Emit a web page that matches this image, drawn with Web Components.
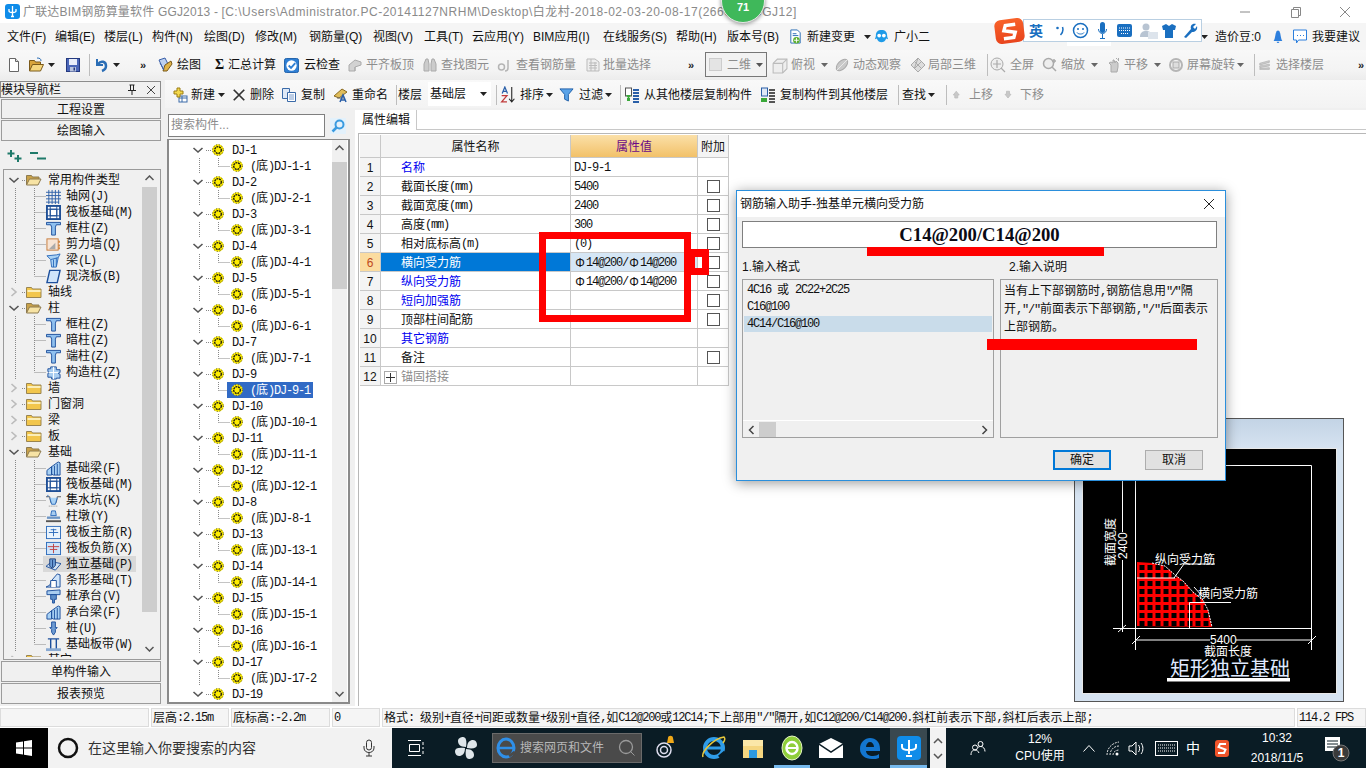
<!DOCTYPE html>
<html lang="zh-CN"><head><meta charset="utf-8"><title>GGJ2013</title>
<style>
html,body{margin:0;padding:0;width:1366px;height:768px;overflow:hidden;background:#f0f0f0;font:12px/16px "Liberation Sans","Noto Sans CJK SC",sans-serif;color:#111}
body{display:flex;flex-direction:column;position:relative}
</style></head><body>
<gl-titlebar></gl-titlebar>
<gl-menubar></gl-menubar>
<gl-toolbar></gl-toolbar>
<gl-workspace>
  <gl-nav slot="nav"></gl-nav>
  <gl-comptools slot="tools"></gl-comptools>
  <gl-comptree slot="tree"></gl-comptree>
  <gl-props slot="props"></gl-props>
</gl-workspace>
<gl-statusbar></gl-statusbar>
<gl-taskbar></gl-taskbar>
<gl-badge></gl-badge>
<gl-ime></gl-ime>
<gl-dialog></gl-dialog>
<gl-mark x="539" y="232" w="152" h="90" b="7px"></gl-mark>
<gl-mark x="691" y="249" w="18" h="26" b="8px 7px 7px 4px"></gl-mark>
<gl-mark x="867" y="247" w="237" h="9" fill></gl-mark>
<gl-mark x="987" y="339" w="210" h="11" fill></gl-mark>
<script>
const FONT='"Liberation Sans","Noto Sans CJK SC",sans-serif';
const BASE=`:host{box-sizing:border-box}*{box-sizing:border-box} svg{display:block;flex:none} .l{font-family:"Liberation Mono",monospace;font-size:12px;letter-spacing:-1.2px}`;
const esc=s=>s.replace(/&/g,'&amp;').replace(/</g,'&lt;');
const sim=s=>esc(s).replace(/[\x20-\x7e]+/g,m=>`<span class="l">${m.replace(/ /g,'&nbsp;')}</span>`);
const simq=s=>sim(s).replace(/<span class="l">"\/"/g,'<span class="l" style="letter-spacing:-3px;margin-right:2px">"/"');
const I={
doc:'<path d="M3.5 1.5h6l3 3v10h-9z" fill="#fff" stroke="#666"/><path d="M9.5 1.5v3h3" fill="#ddd" stroke="#666"/>',
open:'<path d="M1.5 14V3.5h5l1 1.5h5v3" fill="#d9a53c" stroke="#7b5a1a"/><path d="M1.5 14l3-6.500h11l-3 6.500z" fill="#f6d77e" stroke="#7b5a1a"/><path d="M9 1c3 0 4 1 4 3" stroke="#2a6db5" fill="none"/>',
save:'<rect x="1.500" y="1.500" width="13" height="13" fill="#4a66b8" stroke="#24397f"/><rect x="4" y="2" width="8" height="6" fill="#e9eefa"/><rect x="5" y="10" width="6" height="4.500" fill="#b9c4de"/><rect x="8.500" y="10.500" width="1.500" height="3" fill="#24397f"/>',
undo:'<path d="M4 2v6h6" fill="none" stroke="#2a6db5" stroke-width="2"/><path d="M5 7c3-4 8-2.500 8 2 0 2-1.500 4-4 5" fill="none" stroke="#2a6db5" stroke-width="2.500"/>',
draw:'<path d="M2 3l6-2 4 8-5 5z" fill="#bcd0ef" stroke="#3a5fa8"/><path d="M8 8l6-4 1 3-5 7H6z" fill="#dfb347" stroke="#7b5a1a"/><path d="M3 6l4 7" stroke="#3a5fa8"/>',
cloud:'<rect x=".5" y=".5" width="15" height="15" rx="2" fill="#2f7fd4" stroke="#1c5ea8"/><circle cx="8" cy="8" r="5.500" fill="#fff"/><path d="M5 8l2.500 2.500L12 5.500" fill="none" stroke="#2f7fd4" stroke-width="2"/>',
align:'<path d="M2 14V8l6-5 6 2v3l-6 2v4z" fill="#d2d2d2" stroke="#aaa"/><path d="M8 10v4" stroke="#aaa"/>',
binoc:'<path d="M2 14V7l2-5h2l1 5v7zM9 14V7l1-5h2l2 5v7z" fill="#ccc" stroke="#aaa"/>',
eye:'<circle cx="4.500" cy="10" r="3" fill="none" stroke="#b5b5b5" stroke-width="1.500"/><path d="M11 3v8c0 2-1 3-3 3" fill="none" stroke="#b5b5b5" stroke-width="1.500"/>',
batch:'<path d="M2 2h8l4 3v9H2z" fill="#eee" stroke="#bbb"/><path d="M4 6h8M4 8.500h8M4 11h8M6 2v12M10 5v9" stroke="#bbb"/>',
cube:'<path d="M2 6l4-4h9v9l-4 4H2z" fill="#eee" stroke="#bbb"/><path d="M2 6h9v9M11 6l4-4" fill="none" stroke="#bbb"/>',
orbit:'<ellipse cx="8" cy="8" rx="7" ry="4" transform="rotate(-45 8 8)" fill="#c9c9c9" stroke="#aaa"/><path d="M3 13L13 3" stroke="#e8e8e8"/>',
local:'<path d="M8 1l7 7-7 7-7-7z" fill="#ddd" stroke="#aaa"/><path d="M4.500 4.500l7 7M8 1l-3.500 10M11.500 4.500l-7 7" stroke="#aaa"/>',
full:'<circle cx="7" cy="7" r="6" fill="#eee" stroke="#aaa"/><path d="M7 3v8M3 7h8M11 11l4 4" stroke="#aaa" stroke-width="1.200"/>',
zoom:'<circle cx="6.500" cy="6.500" r="5" fill="#eee" stroke="#aaa" stroke-width="1.500"/><path d="M10 10l4 4M12 2v4M10 4h4" stroke="#aaa" stroke-width="1.500"/>',
pan:'<path d="M5 15V8L3 6l2-1 2 1V3l1 0 1 3 1-2 1 1 1 1v4l-1 5z" fill="#ccc" stroke="#aaa"/><path d="M10 1l1.500 1.500M12.500 1v3" stroke="#aaa"/>',
rotate:'<circle cx="8" cy="8" r="6" fill="none" stroke="#b5b5b5" stroke-width="2"/><rect x="5" y="5" width="6" height="6" fill="#ddd" stroke="#aaa"/>',
floors:'<path d="M2 6l11-3v2L2 8zM2 9l11-2v2L2 11zM2 12l11-1v2H2z" fill="#ccc" stroke="#aaa" stroke-width=".7"/>',
newc:'<rect x="7" y="9" width="8" height="6" fill="#fff" stroke="#3a6aa8"/><path d="M7 11h8M10 9v6" stroke="#3a6aa8"/><path d="M5 1h3v3h3v3H8v3H5V7H2V4h3z" fill="#f4d94c" stroke="#9a7d14"/>',
del:'<path d="M2 2l12 12M14 2L2 14" stroke="#333" stroke-width="2"/>',
copy:'<path d="M1.500 1.500h7v10h-7z" fill="#dfe9f7" stroke="#3a6aa8"/><path d="M6.500 5.500h8v9h-8z" fill="#fff" stroke="#3a6aa8"/><path d="M8 8h5M8 10h5M8 12h5" stroke="#7a9ccc"/>',
ren:'<path d="M1 9l8-7 5 3-8 6z" fill="#e0bd5a" stroke="#8a6a20"/><path d="M4 11h7" stroke="#666"/><path d="M7 15l3-7 3 7M8 13h4" fill="none" stroke="#2a5fa8" stroke-width="1.500"/>',
sort:'<path d="M3 7l2.500-6L8 7M4 5h3" fill="none" stroke="#2a5fa8" stroke-width="1.200"/><path d="M2.500 9h5l-5 6h5" fill="none" stroke="#c03a3a" stroke-width="1.200"/><path d="M12 1v14M9.500 12l2.500 3 2.500-3" fill="none" stroke="#222"/>',
filter:'<path d="M1 2h14l-5 6v7l-4-2V8z" fill="#5aa3e8" stroke="#1f5fa8"/>',
cfrom:'<rect x="1.500" y="1" width="6" height="8" fill="#fff" stroke="#555"/><path d="M3 8l2 3h-1v3h3v-3h-1l2-3z" fill="#3aa83a" transform="translate(-1 0)"/><path d="M9 3h6M9 6h6M9 9h6M9 12h6M9 15h6" stroke="#2a5fa8" stroke-width="2"/>',
cto:'<rect x="1.500" y="1" width="6" height="8" fill="#dfe9f7" stroke="#2a5fa8"/><path d="M1 11h6v4H1z" fill="#3aa83a"/><path d="M9 3h6M9 6h6M9 9h6M9 12h6M9 15h6" stroke="#555" stroke-width="2"/>',
up:'<path d="M5 1l4 5H7v4H3V6H1z" transform="translate(2 2)" fill="#c8c8c8" stroke="#bbb"/>',
down:'<path d="M3 0h4v4h2l-4 5-4-5h2z" transform="translate(3 3)" fill="#c8c8c8" stroke="#bbb"/>',
newchg:'<path d="M3 1h7l3 3v11H3z" fill="#fff" stroke="#2a6db5"/><path d="M5 5h4M5 7h6" stroke="#2a6db5"/><circle cx="9" cy="12" r="3.500" fill="#5cae2e"/><path d="M9 9.500v5M6.500 12h5" stroke="#fff"/>',
robot:'<path d="M8 1c4 0 6 2 6 6 0 2 1 3 1 4l-2-1c-1 3-3 4-5 4s-4-1-5-4l-2 1c0-1 1-2 1-4 0-4 2-6 6-6z" fill="#1e9be8"/><circle cx="5.500" cy="7" r="2" fill="#fff"/><circle cx="10.500" cy="7" r="2" fill="#fff"/>',
bell:'<path d="M8 1c-1 0-2 1-2 2-1 1-1 7-3 10h10c-2-3-2-9-3-10 0-1-1-2-2-2z" fill="#2d7fdd"/><path d="M6.500 14a1.500 1.500 0 0 0 3 0z" fill="#2d7fdd"/>',
bub:'<path d="M1.500 1.500h13v10h-8l-2 3v-3h-3z" fill="#fff" stroke="#2d7fdd"/><path d="M5 7h1M8 7h1M11 7h1" stroke="#2d7fdd"/>',
fopen:'<path d="M.5 13V3.500h5l1 1.500H13v3" fill="#c9a24a" stroke="#8c7a50"/><path d="M.5 13l3-6h11.500l-3 6z" fill="#f7e3a4" stroke="#8c7a50"/>',
fclosed:'<path d="M.5 13.500V3.500h5l1 1.500H15v8.500z" fill="#f2c64c" stroke="#9a8550"/><path d="M1.500 6h13v2h-13z" fill="#fbeeb8"/>',
grid:'<path d="M0 3.500h16M0 7h16M0 10.500h16M0 14h14M3 1v15M6.500 1v15M10 1v15M13.500 1v15" stroke="#2d5fa8" fill="none"/>',
raft:'<rect x="1" y="1" width="14" height="14" fill="#fff" stroke="#1f4f96" stroke-width="2"/><rect x="4.500" y="4.500" width="7" height="7" fill="none" stroke="#1f4f96"/><path d="M1 4.500h14M1 11.500h14M4.500 1v14M11.500 1v14" stroke="#1f4f96"/>',
col:'<path d="M.5 1.500h15v2.500H11l-1 2.500v8.500H6V6.500L5 4H.5z" fill="#8fc0ef" stroke="#1d4f9c"/>',
wall:'<rect x="1" y="2" width="12" height="12" fill="#f7e4d4" stroke="#c77a3a"/><path d="M3 13l7-7v7z" fill="#aaa"/><path d="M14 4v2M14 8v2M14 11v2" stroke="#d07a2a" stroke-width="1.500"/>',
beam:'<path d="M1 3l10-1 4-1-2 4-2 10H6L5 7z" fill="#a9d2f5" stroke="#2d6cbc"/><path d="M5 7l8-2M8 7v8M11 5v9" stroke="#2d6cbc"/>',
slab:'<path d="M4 1.500h11l-3 13H1z" fill="#cfe4fa" stroke="#1d4f9c" stroke-width="1.500"/>',
gz:'<path d="M5 2h6v3h4v3l-2 1 2 1v4h-4v1H6v-2H2V9l2-1-2-1V4h3z" fill="#a9cdf0" stroke="#1d4f9c"/><path d="M8 2v13M3 8h10" stroke="#fff"/>',
jcl:'<path d="M1 15V10l5-4V15zM6 6l7-5 2 1v13H8l-2-1z" fill="#a9d2f5" stroke="#1d4f9c"/><path d="M9 5v10M12 3v12" stroke="#1d4f9c"/>',
jsk:'<path d="M0 4h4l1 6h6l1-6h4" fill="none" stroke="#555"/><path d="M2 2v2M4 5l2 7h4l2-7" fill="#a9d2f5" stroke="#2d6cbc"/><path d="M3 14h10" stroke="#888" stroke-dasharray="1 1"/>',
zd:'<path d="M6 2h4l1 5H5z" fill="#a9cdf0" stroke="#2d6cbc"/><rect x="1" y="8" width="14" height="2.500" fill="#6c94c4"/><rect x="0" y="12" width="16" height="2" fill="#555"/>',
zj1:'<rect x=".5" y="1.500" width="15" height="13" fill="#eaf4fd" stroke="#2d6cbc"/><path d="M3 8h10M8 4v8M5 5h6" stroke="#2d6cbc"/>',
zj2:'<rect x=".5" y="1.500" width="15" height="13" fill="#cfe4fa" stroke="#2d6cbc"/><path d="M2 6h12M8 3v10M4 9h8" stroke="#c04040"/>',
dlji:'<path d="M0 10l6-5 10 2-6 7z" fill="#cfe0f2" stroke="#1d4f9c"/><path d="M4 2h6v7l-3 3-3-2z" fill="#6d9fd8" stroke="#1d3f7c"/><path d="M7 3v8" stroke="#1d3f7c"/>',
txj:'<path d="M0 15l4-2 2-5 6-7 3 1v13z" fill="#cfe4fa" stroke="#1d4f9c"/><path d="M5 15V8h6v7" fill="#fff" stroke="#1d4f9c"/>',
zct:'<path d="M1 2l14-1v5H1z" fill="#a9cdf0" stroke="#1d4f9c"/><path d="M5 6h6v5H9v4H7v-4H5z" fill="#5e8fc9" stroke="#1d4f9c"/>',
pile:'<path d="M6 1h4v6h2l-2 2v3l-2 3-2-3V9L4 7h2z" fill="#6e9bd2" stroke="#1d4f9c"/>',
jcbd:'<path d="M2 2h12M2 14h12M5 2v12M11 2v12" stroke="#1d4f9c" stroke-width="1.500"/><rect x="0" y="12" width="16" height="3" fill="#8aaad2"/>',
gear:'<circle cx="6" cy="6" r="5.800" fill="#ffee00"/><circle cx="6" cy="6" r="5.300" fill="none" stroke="#222" stroke-width=".9" stroke-dasharray="1 1.800"/><circle cx="6" cy="6" r="3.300" fill="none" stroke="#111" stroke-width="1.300" stroke-dasharray="2 .7"/>'
};
const ico=(n,w=16,h=16,vb='0 0 16 16')=>`<svg width="${w}" height="${h}" viewBox="${vb}" aria-hidden="true">${I[n]}</svg>`;
const caret=(c='#222')=>`<svg width="7" height="4" viewBox="0 0 7 4"><path d="M0 0h7L3.500 4z" fill="${c}"/></svg>`;
const chev=(dir,x,c)=>dir==='d'?`<path d="M${x-4.500} 6l4.500 4 4.500-4" fill="none" stroke="${c||'#555'}" stroke-width="1.600"/>`:`<path d="M${x-2.500} 4l4.500 4-4.500 4" fill="none" stroke="${c||'#bbb'}" stroke-width="1.600"/>`;
function define(name,css,html,after){
  customElements.define(name,class extends HTMLElement{
    connectedCallback(){ if(this.shadowRoot)return;
      const r=this.attachShadow({mode:'open'});
      r.innerHTML=`<style>${BASE}${css}</style>${typeof html==='function'?html(this):html}`;
      if(after)after(this,r);
    }
  });
}
/* ---------- title bar ---------- */
define('gl-titlebar',`:host{display:flex;align-items:center;height:23px;background:#fff;color:#8a8a8a;font-size:12px;padding-left:5px;flex:none}
.t{margin-left:3px;white-space:nowrap;flex:none;width:790px;overflow:hidden;letter-spacing:.17px}.t span{letter-spacing:.52px}.w{margin-left:auto;display:flex}.w svg{width:50px;height:16px;}`,
`<svg width="15" height="15" viewBox="0 0 15 15"><rect width="15" height="15" rx="3" fill="#0f8ce9"/><path d="M7.500 2v10M4 5v2c0 2 7 2 7 0V5M6 12.500h3" stroke="#fff" fill="none" stroke-width="1.300"/></svg>
<span class="t">广联达BIM钢筋算量软件 GGJ2013 - [<span>C:\\Users\\Administrator.PC-20141127NRHM\\Desktop\\白龙村-2018-02-03-20-08-17(2660版).GGJ12]</span></span>
<span class="w"><svg viewBox="0 0 50 16"><path d="M20 8h10" stroke="#888"/></svg><svg viewBox="0 0 50 16"><path d="M21.500 5.500h7v8h-7zM23.500 5.500v-2h7v8h-2" fill="none" stroke="#888"/></svg><svg viewBox="0 0 50 16" style="margin-right:-4px"><path d="M20 3l10 10M30 3L20 13" stroke="#888"/></svg></span>`);
/* ---------- menu bar ---------- */
define('gl-menubar',`:host{display:flex;align-items:center;height:27px;flex:none;background:#f5f5f5;padding-left:7px;white-space:nowrap;color:#111}
span.m{display:block}`,()=>{
 const it=[['文件(F)',48],['编辑(E)',49],['楼层(L)',48],['构件(N)',52],['绘图(D)',51],['修改(M)',54],['钢筋量(Q)',64],['视图(V)',51],['工具(T)',48],['云应用(Y)',61],['BIM应用(I)',70],['在线服务(S)',73],['帮助(H)',51],['版本号(B)',61]];
 return it.map(([t,w])=>`<span class="m" style="width:${w}px">${t}</span>`).join('')+
 `${ico('newchg',15,15)}<span class="m" style="margin-left:4px;width:57px">新建变更</span>${caret()}<span style="width:3px"></span>${ico('robot',15,15)}<span class="m" style="margin-left:5px;width:307px">广小二</span>${caret()}<span class="m" style="margin-left:7px;width:56px">造价豆:0</span>${ico('bell',14,15)}<span style="width:7px"></span>${ico('bub',16,17)}<span class="m" style="margin-left:4px">我要建议</span>`;
});
/* ---------- generic strip of fixed-width tools ---------- */
const toolCSS=`.i{display:flex;align-items:center;flex:none;white-space:nowrap;height:100%}.i .c{margin-left:auto}.g{color:#8d8d8d}.sep{width:1px;height:22px;background:#bdbdbd;flex:none}
.more{font:bold 11px/1 "Liberation Sans";color:#222;letter-spacing:-1px}`;
function tools(list){let out='';for(const it of list){
  if(it.sep!==undefined){out+=`<span style="width:${it.w}px;flex:none;display:flex;align-items:center;justify-content:center"><span class="sep"></span></span>`;continue}
  const cls='i'+(it.g?' g':'');let inner='';
  if(it.raw)inner+=it.raw;
  if(it.ic)inner+=ico(it.ic,it.iw||16,it.iw||16);
  if(it.t)inner+=`<span style="margin-left:${it.tx}px">${it.t}</span>`;
  if(it.car)inner+=`<span style="margin-left:${it.car}px">${caret(it.g?'#666':'#222')}</span>`;
  out+=`<span class="${cls}" style="width:${it.w}px">${inner}</span>`;
 }return out}
define('gl-toolbar',`:host{display:flex;height:30px;flex:none;padding:1px 0 1px 6px;align-items:stretch;background:linear-gradient(#f8f8f8,#f3f3f3 70%,#ececec);font-size:12px}
${toolCSS}.box{display:flex;align-items:center;gap:5px;flex:none;width:62px;margin:1px 4px 2px 0;border:1px solid #777;padding-left:3px;color:#8d8d8d;background:#f2f2f2;white-space:nowrap}
.box i{width:13px;height:13px;background:#e4e4e4;border:1px solid #ccc;flex:none}`,
()=>tools([
{ic:'doc',w:22},{ic:'open',w:20},{raw:caret(),w:17},{ic:'save',w:20},{sep:1,w:8},{ic:'undo',w:20},{raw:caret(),w:27},
{raw:'<span class="more">»</span>',w:17},
{ic:'draw',t:'绘图',tx:4,w:54},{raw:'<b style="font:bold 14px/1 \'Liberation Serif\';width:17px;text-align:center">Σ</b>',t:'汇总计算',tx:0,w:73},
{ic:'cloud',iw:15,t:'云检查',tx:5,w:63},{ic:'align',t:'平齐板顶',tx:3,g:1,w:75},{ic:'binoc',t:'查找图元',tx:3,g:1,w:75},{ic:'eye',t:'查看钢筋量',tx:3,g:1,w:88},{ic:'batch',t:'批量选择',tx:2,g:1,w:103},
{raw:'<span class="more">»</span>',w:17}])+
`<span class="box"><i></i>二维<span style="margin-left:auto;margin-right:4px">${caret('#555')}</span></span>`+
tools([{ic:'cube',iw:17,t:'俯视',tx:3,g:1,car:6,w:63},{ic:'orbit',t:'动态观察',tx:3,g:1,w:76},{ic:'local',t:'局部三维',tx:2,g:1,w:75},{sep:1,w:5},
{ic:'full',t:'全屏',tx:4,g:1,w:52},{ic:'zoom',t:'缩放',tx:3,g:1,car:6,w:64},{ic:'pan',t:'平移',tx:2,g:1,car:6,w:62},{ic:'rotate',t:'屏幕旋转',tx:3,g:1,car:2,w:82},{sep:1,w:8},
{ic:'floors',iw:14,t:'选择楼层',tx:4,g:1,w:100},{raw:'<span class="more">»</span>',w:8}]));
/* ---------- workspace ---------- */
define('gl-workspace',`:host{display:grid;grid-template-columns:162px 1fr;grid-template-rows:28px 1fr;height:626px;flex:none;background:#f0f0f0}
.n{grid-row:1/3;display:block}.t{grid-column:2}.b{grid-column:2;display:flex;min-height:0}`,
`<slot class="n" name="nav"></slot><div class="t"><slot name="tools"></slot></div><div class="b"><slot name="tree"></slot><slot name="props"></slot></div>`);
define('gl-comptools',`:host{display:flex;height:28px;padding:1px 0 0 7px;background:linear-gradient(#f9f9f9,#f3f3f3);margin-left:3px;align-items:stretch;font-size:12px;color:#111}${toolCSS}
.sep{height:20px}.cb{display:flex;align-items:center;background:#fff;width:63px;height:24px;margin:1px 3px 0 0;padding-left:2px;flex:none;white-space:nowrap}.cb span{margin-left:auto;margin-right:4px}`,
()=>tools([{ic:'newc',t:'新建',tx:3,car:3,w:60},{ic:'del',iw:14,t:'删除',tx:4,w:49},{ic:'copy',t:'复制',tx:4,w:52},{ic:'ren',t:'重命名',tx:3,w:61},{sep:1,w:4},{t:'楼层',tx:0,w:30}])+
`<span class="cb">基础层<span>${caret()}</span></span>`+
tools([{sep:1,w:5},{ic:'sort',iw:17,t:'排序',tx:4,car:2,w:60},{ic:'filter',iw:15,t:'过滤',tx:5,car:2,w:58},{sep:1,w:7},{ic:'cfrom',t:'从其他楼层复制构件',tx:4,w:136},{ic:'cto',t:'复制构件到其他楼层',tx:4,w:134},{sep:1,w:8},{t:'查找',tx:0,car:2,w:40},{sep:1,w:9},{ic:'up',iw:12,t:'上移',tx:6,g:1,w:51},{ic:'down',iw:12,t:'下移',tx:6,g:1,w:60}]));
/* ---------- scrollbar ---------- */
define('gl-vscroll',`:host{display:flex;flex-direction:column;width:15px;background:#f0f0f0;flex:none;height:100%}
.a{height:16px;flex:none;display:flex;align-items:center;justify-content:center}.th{background:#cdcdcd;flex:none}.f{flex:1}`,
h=>`<div class="a"><svg width="9" height="6" viewBox="0 0 9 6"><path d="M.5 5l4-4 4 4" fill="none" stroke="#555" stroke-width="1.500"/></svg></div>
<div class="th" style="margin-top:${h.getAttribute('top')}px;height:${h.getAttribute('size')}px"></div><div class="f"></div>
<div class="a"><svg width="9" height="6" viewBox="0 0 9 6"><path d="M.5 1l4 4 4-4" fill="none" stroke="#555" stroke-width="1.500"/></svg></div>`);
/* ---------- nav ---------- */
const navRows=[
['o','常用构件类型'],['c','轴网(J)','grid'],['c','筏板基础(M)','raft'],['c','框柱(Z)','col'],['c','剪力墙(Q)','wall'],['c','梁(L)','beam'],['e','现浇板(B)','slab'],
['f','轴线'],['o','柱'],['c','框柱(Z)','col'],['c','暗柱(Z)','col'],['c','端柱(Z)','col'],['e','构造柱(Z)','gz'],
['f','墙'],['f','门窗洞'],['f','梁'],['f','板'],['o','基础'],['c','基础梁(F)','jcl'],['c','筏板基础(M)','raft'],['c','集水坑(K)','jsk'],['c','柱墩(Y)','zd'],['c','筏板主筋(R)','zj1'],['c','筏板负筋(X)','zj2'],['s','独立基础(P)','dlji'],['c','条形基础(T)','txj'],['c','桩承台(V)','zct'],['c','承台梁(F)','jcl'],['c','桩(U)','pile'],['e','基础板带(W)','jcbd'],['f','其它']];
define('gl-navtree',`:host{display:flex;height:491px;flex:none;margin:1px 1px 0 3px;border:1px solid #9a9a9a;padding-right:3px;padding-bottom:2px;background:#f0f0f0;overflow:hidden}
.rows{flex:1;padding-top:2px;overflow:hidden;width:0}.r{display:flex;align-items:center;height:16px;white-space:nowrap}.t{margin-left:6px}.ct{margin-left:5px}
.s{display:flex;align-items:center;background:#d9d9d9;width:93px;margin-left:-3px;padding-left:3px;height:16px}`,
()=>{let h='<div class="rows">';for(const [k,t,ic] of navRows){
 if(k==='o'||k==='f'){h+=`<div class="r"><svg width="22" height="16">${chev(k==='o'?'d':'r',10)}<path d="M18 8.500h4" stroke="#888" stroke-dasharray="1 1"/></svg>${ico(k==='o'?'fopen':'fclosed')}<span class="t">${sim(t)}</span></div>`}
 else{const half=k==='e';const body=`${ico(ic,15,15)}<span class="ct">${sim(t)}</span>`;
 h+=`<div class="r"><svg width="42" height="16"><path d="M11.500 0v16" stroke="#888" stroke-dasharray="1 1"/><path d="M30.500 0v${half?8:16}M30.500 8.500h11" stroke="#888" stroke-dasharray="1 1" fill="none"/></svg>${k==='s'?`<span class="s">${body}</span>`:body}</div>`}
}return h+`</div><gl-vscroll top="1" size="425"></gl-vscroll>`});
define('gl-nav',`:host{display:flex;flex-direction:column;height:626px;width:162px;background:#f0f0f0;font-size:12px}
.h{display:flex;align-items:center;height:17px;margin:1px 1px 0 0;border:1px solid #8c8c8c;white-space:nowrap;flex:none}.h svg:first-of-type{margin-left:auto}
.b{display:flex;align-items:center;justify-content:center;height:21px;padding-top:1px;border:1px solid #9c9c9c;background:#f0f0f0;margin:1px 1px 0 1px;flex:none}
.pl{display:flex;align-items:center;gap:7px;height:27px;padding:2px 0 0 7px;flex:none}`,
`<div class="h">模块导航栏<svg width="10" height="11" viewBox="0 0 10 11"><path d="M2.500 1h5M3.500 1v5M6.500 1v5M1 6.500h8M5 6v5" stroke="#222" fill="none"/></svg><svg width="8" height="8" viewBox="0 0 8 8" style="margin:0 5px 0 10px"><path d="M0 0l8 8M8 0L0 8" stroke="#444"/></svg></div>
<div class="b" style="height:20px">工程设置</div><div class="b">绘图输入</div>
<div class="pl"><svg width="16" height="14" viewBox="0 0 16 14"><path d="M4 1v7M0.500 4.500h7M11 6v7M7.500 9.500h7" stroke="#1f7a6a" stroke-width="2"/></svg><svg width="16" height="14" viewBox="0 0 16 14"><path d="M0 4h8M7 9.500h9" stroke="#1f7a6a" stroke-width="2"/></svg></div>
<gl-navtree></gl-navtree>
<div class="b">单构件输入</div><div class="b">报表预览</div>`);
/* ---------- component tree ---------- */
const dj=[1,2,3,4,5,6,7,9,10,11,12,8,13,14,15,16,17,19];
define('gl-comptree',`:host{display:flex;flex-direction:column;width:188px;height:598px;flex:none;padding:6px 0 0 6px;font-size:12px;color:#111}
.s{display:flex;align-items:center;height:23px;flex:none}.in{width:157px;height:23px;border:1px solid #7f7f7f;background:#fff;color:#8c8c8c;padding-left:2px;line-height:21px;font-size:12px}
.box{display:flex;height:565px;flex:none;margin:2px 0 0 -1px;width:183px;border:1px solid #8a8a8a;border-width:1px 2px 2px 2px;padding-right:1px;background:#fff;overflow:hidden}
.rows{flex:1;width:0;overflow:hidden;padding:2px 0 0 1px}.r{display:flex;align-items:center;height:16px;white-space:nowrap}.t{margin-left:9px}
.sel{display:flex;align-items:center;background:#316ac5;color:#fff;height:16px;padding:0 3px 0 4px;margin-left:-4px}`,
()=>{let h=`<div class="s"><div class="in">搜索构件...</div><svg width="16" height="16" viewBox="0 0 16 16" style="margin-left:5px"><rect width="16" height="16" fill="#e3f1fb"/><circle cx="9.500" cy="6.500" r="4" fill="none" stroke="#3a9be0" stroke-width="2"/><path d="M6.500 9.500L2.500 13.500" stroke="#3a9be0" stroke-width="2.500"/></svg></div><div class="box"><div class="rows">`;
for(const n of dj){const c=n===17?'2':'1';const sel=n===9;
 h+=`<div class="r"><svg width="42" height="16">${chev('d',28)}<path d="M36 8.500h5" stroke="#888" stroke-dasharray="1 1"/></svg>${ico('gear',12,12,'0 0 12 12')}<span class="t" style="margin-left:8px">${sim('DJ-'+n)}</span></div>`;
 const g=`${ico('gear',12,12,'0 0 12 12')}<span class="t" style="margin-left:7px">${sim('(底)DJ-'+n+'-'+c)}</span>`;
 h+=`<div class="r"><svg width="61" height="16"><path d="M29.500 0v16M48.500 0v8.500M48.500 8.500h11" stroke="#888" stroke-dasharray="1 1" fill="none"/></svg>${n===19?'':sel?`<span class="sel">${g}</span>`:g}</div>`;
}return h+`</div><gl-vscroll top="6" size="127"></gl-vscroll></div>`});
/* ---------- properties ---------- */
const PHI='<span style="display:inline-block;width:12px;text-align:center;font:12px/1 \'Liberation Sans\'">Φ</span>';
const rebar=`${PHI}${sim('14@200/')}${PHI}${sim('14@200')}`;
const rows=[['名称',sim('DJ-9-1'),0,1],['截面长度(mm)',sim('5400'),1],['截面宽度(mm)',sim('2400'),1],['高度(mm)',sim('300'),1],['相对底标高(m)',sim('(0)'),1],['横向受力筋',rebar,1,0],['纵向受力筋',rebar,1,1],['短向加强筋','',1,1],['顶部柱间配筋','',1],['其它钢筋','',0,1],['备注','',1],['锚固搭接','',0]];
define('gl-prop-table',`:host{display:grid;grid-template-columns:21px 190px 127px 31px;grid-template-rows:23px;grid-auto-rows:19px;width:369px;flex:none;font-size:12px;background:#fff;align-self:flex-start}
div{border-bottom:1px solid #c8c8c8;border-right:1px solid #c8c8c8;display:flex;align-items:center;white-space:nowrap}
.hd{background:#f4f4f4;justify-content:center;padding-top:2px}.hd.v{background:linear-gradient(#fbe0a8,#f2c169);color:#6a0a86}
.n{background:#f4f4f4;justify-content:center;font-size:12px;color:#111;padding-top:1px}.nm{padding:2px 0 0 20px}.u{color:#0000f0}.v2{padding:2px 0 0 3px}
.ck{justify-content:center}.ck i{display:block;width:13px;height:13px;border:1px solid #555;background:#fff}
.act.n{background:#fbdca0;color:#c0491a}.act.nm{background:#0078d7;color:#fff}.act.v2{background:#d5e6f5}
.g{color:#8c8c8c}.p{display:flex;width:13px;height:13px;border:1px solid #aaa;align-items:center;justify-content:center;margin:0 4px 0 -17px;flex:none}`,
()=>{let h=`<div class="hd"></div><div class="hd">属性名称</div><div class="hd v">属性值</div><div class="hd">附加</div>`;
rows.forEach((r,i)=>{const a=i===5?' act':'';const cl=r[3]?' u':'';const last=i===11;
 h+=`<div class="n${a}">${i+1}</div><div class="nm${a}${cl}${last?' g':''}">${last?`<span class="p"><svg width="9" height="9" viewBox="0 0 9 9"><path d="M0 4.500h9M4.500 0v9" stroke="#333"/></svg></span>`:''}${sim(r[0])}</div><div class="v2${a}">${r[1]}</div><div class="ck">${r[2]?'<i></i>':''}</div>`});
return h});
define('gl-preview',`:host{display:block;width:270px;height:284px;flex:none;border:1px solid #555;background:linear-gradient(#c3d4e5 0,#d6e3f1 30px);padding:30px 7px 8px 8px;margin-left:345px;margin-top:283px}
svg{background:#000;outline:1px solid #e8e8e8}`,
()=>{let g='';for(let x=1138;x<1216;x+=8)g+=`M${x} 560V630`;for(let y=563.500;y<630;y+=8)g+=`M1135 ${y}H1216`;
return `<svg width="253" height="244" viewBox="1083 449 253 244" font-family='"Noto Sans CJK SC",sans-serif' font-size="12" fill="#fff">
<defs><clipPath id="c"><path d="M1137 562L1152 563 1165 566 1175 575 1183 581 1193 592 1203 600 1208 610 1212 627 1137 626z"/></clipPath></defs>
<path d="${g}" clip-path="url(#c)" stroke="#f00" stroke-width="3" fill="none"/>
<path d="M1152 563L1165 566 1175 575 1183 581 1193 592 1203 600 1208 610 1212 627" fill="none" stroke="#fff" stroke-dasharray="2 1"/>
<path d="M1135.500 465.500H1311.500V628.500H1135.500ZM1137 578H1175M1189.500 628V602.500H1231M1174 578l10-14H1215M1194 587l9 10M1122.500 449V532M1122.500 560V632M1113 628.500H1135M1118 632l8-7M1135.500 628V650M1311.500 628V650M1136 640H1210M1236 640H1311M1132 644l8-8M1308 644l8-8" fill="none" stroke="#fff"/>
<text x="1155" y="564">纵向受力筋</text><text x="1198" y="598">横向受力筋</text>
<text x="1210" y="644" font-family="Liberation Sans">5400</text><text x="1204" y="656">截面长度</text>
<text transform="translate(1115 566) rotate(-90)">截面宽度</text><text transform="translate(1127 559) rotate(-90)" font-family="Liberation Sans" font-size="12">2400</text>
<text x="1170" y="676" font-size="20" fill="#dfe9ff">矩形独立基础</text>
<rect x="1167" y="678" width="123" height="3.500"/></svg>`});
define('gl-props',`:host{display:flex;flex-direction:column;width:1011px;height:596px;flex:none;margin:2px 0 0 5px;background:#fff;font-size:12px}
.tabs{display:flex;height:20px;flex:none;border-bottom:1px solid #c8c8c8;background:#fff}.tab{width:62px;height:20px;padding:2px 0 0 7px;border-right:1px solid #c8c8c8;background:#fff;font-size:12px}
.p{flex:1;margin:3px 0 0 3px;border:1px solid #b8b8b8;border-width:1px 0 0 1px;padding:1px 0 0 1px;display:flex;min-height:0;overflow:hidden}`,
`<div class="tabs"><div class="tab">属性编辑</div></div><div class="p"><gl-prop-table></gl-prop-table><gl-preview></gl-preview></div>`);
/* ---------- status bar ---------- */
define('gl-statusbar',`:host{display:flex;height:22px;flex:none;gap:2px;background:#fff;padding:2px 0 1px 0;font-size:12px;white-space:nowrap;overflow:hidden}
div{border:1px solid #dcdcdc;background:#f5f5f5;display:flex;align-items:center;padding:1px 0 0 1px;flex:none;height:19px}`,
`<div style="width:149px"></div><div style="width:78px">${sim('层高:2.15m')}</div><div style="width:99px">${sim('底标高:-2.2m')}</div><div style="width:48px">${sim('0')}</div><div style="width:913px">${sim('格式: 级别+直径+间距或数量+级别+直径,如C12@200或12C14;下上部用"/"隔开,如C12@200/C14@200.斜杠前表示下部,斜杠后表示上部;')}</div><div style="width:69px">${sim('114.2 FPS')}</div>`);
/* ---------- task bar ---------- */
const W='fill="#fff"';
define('gl-taskbar',`:host{display:flex;align-items:center;height:40px;flex:none;background:#0a1c25;color:#fff;font-size:12px;white-space:nowrap}
.st{width:48px;height:40px;background:#000;display:flex;align-items:center;justify-content:center;flex:none}
.se{width:344px;height:40px;background:#f2f2f2;color:#333;font-size:14px;display:flex;align-items:center;flex:none}
.bx{display:flex;align-items:center;width:150px;height:30px;background:#4a4a4a;border:1px solid #6a6a6a;color:#b8b8b8;flex:none;margin-left:14px}
.sl{width:36px;height:40px;display:flex;align-items:center;justify-content:center;flex:none;position:relative;background:transparent}
.on{background:#39484f}.bar::after{content:"";display:block;position:absolute;left:0;right:0;bottom:0;height:3px;background:#76b9ed}
.ar{width:16px;height:40px;background:#f2f2f2;display:flex;flex-direction:column;align-items:center;justify-content:space-around;padding:5px 0;flex:none}
.cpu{text-align:center;line-height:17px;width:70px;flex:none}`,
`<div class="st"><svg width="16" height="16" viewBox="0 0 16 16"><path d="M0 2.500l7-1v6H0zM8 1.300l8-1.300v7.500H8zM0 8.500h7v6l-7-1zM8 8.500h8V16l-8-1.200z" ${W}/></svg></div>
<div class="se"><svg width="22" height="22" viewBox="0 0 22 22" style="margin:0 7px 0 9px"><circle cx="11" cy="11" r="9" fill="none" stroke="#111" stroke-width="2.500"/></svg><span style="margin-left:2px;width:275px">在这里输入你要搜索的内容</span><svg width="12" height="18" viewBox="0 0 12 18"><rect x="3.500" y="1" width="5" height="10" rx="2.500" fill="none" stroke="#333"/><path d="M1 7v2c0 6 10 6 10 0V7M6 14v3M3 17h6" fill="none" stroke="#333"/></svg></div>
<svg width="18" height="16" viewBox="0 0 18 16" style="margin-left:15px"><path d="M1 .5h13M1 15.500h13M2.500 4.500h10v7h-10zM16 2v3M16 7v2M16 11v3" fill="none" stroke="#fff"/></svg>
<svg width="24" height="24" viewBox="0 0 24 24" style="margin-left:29px"><g fill="#dfe6ea"><path d="M12 11C6 11 4 8 4 5c0-3 3-4 5-4 3 0 4 4 3 10z"/><path d="M13 12c0-6 3-8 6-8 3 0 4 3 4 5 0 3-4 4-10 3z"/><path d="M12 13c6 0 8 3 8 6 0 3-3 4-5 4-3 0-4-4-3-10z"/><path d="M11 12c0 6-3 8-6 8-3 0-4-3-4-5 0-3 4-4 10-3z"/></g></svg>
<div class="bx"><svg width="20" height="24" viewBox="0 0 20 24" style="margin-left:3px"><ellipse cx="10" cy="12" rx="8" ry="9" fill="none" stroke="#2f8fe8" stroke-width="3"/><path d="M3 12h14" stroke="#2f8fe8" stroke-width="2.500"/><path d="M13 20l6-4" stroke="#4a4a4a" stroke-width="3"/></svg><span style="margin-left:4px;width:98px">搜索网页和文件</span><svg width="18" height="18" viewBox="0 0 18 18"><circle cx="8" cy="8" r="6.500" fill="none" stroke="#9a9a9a" stroke-width="1.300"/><path d="M12.500 12.500l4 4" stroke="#9a9a9a"/></svg></div>
<span class="sl" style="width:31px;margin-left:8px"><svg width="24" height="26" viewBox="0 0 24 26"><circle cx="10" cy="15" r="7" fill="none" stroke="#dde" stroke-width="1.500"/><circle cx="10" cy="15" r="3.500" fill="none" stroke="#dde" stroke-width="1.500"/><path d="M14 3c0-3 5-3 5 0l1 5h-7z" fill="#f0a818"/></svg></span>
<span class="sl" style="margin-left:15px"><svg width="26" height="26" viewBox="0 0 26 26"><ellipse cx="13" cy="13" rx="9" ry="9" fill="none" stroke="#2f9ce8" stroke-width="4"/><path d="M4 13h18" stroke="#2f9ce8" stroke-width="3"/><path d="M18 22l6-5" stroke="#0a1c25" stroke-width="3"/><path d="M2 22C0 17 12 4 23 2c2 2-1 6-1 6" fill="none" stroke="#e8c83c" stroke-width="1.500"/></svg></span>
<span class="sl" style="margin-left:3px"><svg width="24" height="24" viewBox="0 0 24 24"><path d="M2 4h9l2 3h9v15H2z" fill="#f5d680"/><rect x="8" y="14" width="8" height="8" fill="#2e9ae0"/><path d="M2 4h20v6H2z" fill="#fbe7a8"/></svg></span>
<span class="sl bar" style="margin-left:3px"><svg width="24" height="26" viewBox="0 0 24 26"><ellipse cx="12" cy="13" rx="10" ry="12" fill="#8fce3a" stroke="#e8f5c8"/><ellipse cx="12" cy="13" rx="5.500" ry="6" fill="none" stroke="#fff" stroke-width="2.500"/><path d="M6 13h12" stroke="#fff" stroke-width="2"/></svg></span>
<span class="sl" style="margin-left:3px"><svg width="24" height="20" viewBox="0 0 24 20"><path d="M0 6L12 0l12 6v14H0z" fill="#fff"/><path d="M0 6l12 8 12-8" fill="none" stroke="#0a1c25" stroke-width="1.500"/></svg></span>
<span class="sl" style="margin-left:3px"><svg width="22" height="22" viewBox="0 0 22 22"><path d="M1 12C1 5 6 1 11 1c6 0 10 4 10 11v2H7c0 3 3 5 7 5 2 0 5-1 6-2v4c-2 1-4 1-7 1C6 22 1 18 1 12zm6-2h8c0-3-2-5-4-5s-4 2-4 5z" fill="#1376d0"/></svg></span>
<span class="sl on bar" style="margin-left:2px;width:37px"><svg width="24" height="24" viewBox="0 0 24 24"><rect width="24" height="24" rx="4" fill="#0f8ce9"/><path d="M12 4v14M5 8v3c0 4 14 4 14 0V8M9 20h6" fill="none" stroke="#fff" stroke-width="2"/></svg></span>
<div class="ar" style="margin-left:3px"><svg width="10" height="6" viewBox="0 0 10 6"><path d="M1 5l4-4 4 4" fill="none" stroke="#555" stroke-width="1.500"/></svg><svg width="10" height="6" viewBox="0 0 10 6"><path d="M1 1l4 4 4-4" fill="none" stroke="#555" stroke-width="1.500"/></svg></div>
<svg width="16" height="16" viewBox="0 0 16 16" style="margin-left:24px"><circle cx="10.500" cy="4" r="2.500" fill="none" stroke="#fff"/><circle cx="5" cy="7.500" r="2.500" fill="none" stroke="#fff"/><path d="M1 15c0-4 2-5 4-5s3 1 4 3M8 7.500c1-1 2-1 3-1 2 0 4 2 4 5" fill="none" stroke="#fff"/></svg>
<div class="cpu" style="margin-left:19px">12%<br>CPU使用</div>
<svg width="12" height="7" viewBox="0 0 12 7" style="margin-left:8px"><path d="M.5 6.500l5.500-6 5.500 6" fill="none" stroke="#fff"/></svg>
<svg width="16" height="15" viewBox="0 0 16 15" style="margin-left:11px"><path d="M1 14C1 7 6 2 13 1M4 14c0-5 4-9 9-9M7 14c0-3 3-5 6-5" fill="none" stroke="#ddd" stroke-dasharray="2 1"/><circle cx="11" cy="13" r="1.500" fill="#fff"/></svg>
<svg width="16" height="15" viewBox="0 0 16 15" style="margin-left:6px"><path d="M1 5h3l4-4v13l-4-4H1zM10.500 4c1.500 2 1.500 5 0 7M13 2c2.500 3 2.500 8 0 11" fill="none" stroke="#fff"/></svg>
<svg width="23" height="15" viewBox="0 0 23 15" style="margin-left:11px"><rect x=".5" y=".5" width="22" height="14" fill="none" stroke="#fff"/><path d="M3 4h17M3 7h17M3 10h17" stroke="#fff" stroke-dasharray="1 1"/></svg>
<span style="font-size:14px;margin-left:8px;width:22px">中</span>
<svg width="14" height="17" viewBox="0 0 14 17" style="margin-left:7px"><rect width="14" height="17" rx="3" fill="#f0542a"/><path d="M11 4H5L3.500 7l7 2.500L9 13H3" fill="none" stroke="#fff" stroke-width="2"/></svg>
<div style="margin-left:12px;width:72px;text-align:center;line-height:20px;flex:none">10:32<br>2018/11/5</div>
<svg width="28" height="30" viewBox="0 0 28 30" style="margin-left:11px"><path d="M1 4h15v14h-3l-3 3v-3H1z" fill="#fff"/><path d="M3 8h11M3 11h11M3 14h11" stroke="#0a1c25"/><circle cx="17" cy="20" r="8" fill="#3a3a3a" stroke="#777"/><text x="17" y="24" text-anchor="middle" font-family="Liberation Sans" font-size="12" font-weight="bold" fill="#fff">1</text></svg>`);
/* ---------- overlays ---------- */
define('gl-mark',`:host{position:absolute;display:block;border-style:solid;border-color:#f00}`,'',(h)=>{
  const a=n=>h.getAttribute(n);Object.assign(h.style,{left:a('x')+'px',top:a('y')+'px',width:a('w')+'px',height:a('h')+'px'});
  if(h.hasAttribute('fill')){h.style.background='#f00';h.style.borderWidth='0'}else h.style.borderWidth=a('b');
});
define('gl-badge',`:host{position:absolute;left:721px;top:-21px;width:44px;height:44px;border-radius:50%;background:#3fb85a;border:1px solid #e8e8e8;box-shadow:0 1px 4px rgba(0,0,0,.45);color:#fff;font:bold 11px/1 "Liberation Sans";display:flex;align-items:flex-end;justify-content:center;padding-bottom:9px}`,`71`);
define('gl-ime',`:host{position:absolute;left:995px;top:19px;display:flex;align-items:flex-start;font-family:${FONT}}
.s{width:29px;height:24px;border-radius:6px;background:linear-gradient(#f8622a,#e8441c);transform:rotate(-7deg);display:flex;align-items:center;justify-content:center;flex:none;z-index:1}
.b{width:179px;height:23px;margin-left:-1px;background:#fff;border:1px solid #b9cfe2;display:flex;align-items:center;padding-left:5px;color:#1a6fc0;font:bold 14px/1 ${FONT}}
.p{position:absolute;left:72px;top:23px;width:44px;height:4px;background:#fff}`,
`<div class="s"><svg width="20" height="20" viewBox="0 0 20 20"><path d="M16 4H6L4 9l11 3-2 5H3" fill="none" stroke="#fff" stroke-width="3.500"/></svg></div>
<div class="b"><span style="width:27px">英</span><svg width="8" height="12" viewBox="0 0 8 12" style="margin-right:8px"><circle cx="1.500" cy="3" r="1.300" fill="#1a6fc0"/><path d="M6.500 2c1 3 0 6-2 8" fill="none" stroke="#1a6fc0" stroke-width="1.500"/></svg>
<svg width="17" height="17" viewBox="0 0 17 17" style="margin-right:9px"><circle cx="8.500" cy="8.500" r="7" fill="#fff" stroke="#1a6fc0" stroke-width="1.500"/><circle cx="6" cy="7" r="1" fill="#1a6fc0"/><circle cx="11" cy="7" r="1" fill="#1a6fc0"/><path d="M5 10.500c1 2 6 2 7 0" fill="none" stroke="#1a6fc0"/></svg>
<svg width="9" height="17" viewBox="0 0 9 17" style="margin-right:10px"><rect x="2" y="0" width="5" height="11" rx="2.500" fill="#1a6fc0"/><path d="M.5 7c0 6 8 6 8 0M4.500 12v4M2 16.500h5" fill="none" stroke="#1a6fc0"/></svg>
<svg width="15" height="13" viewBox="0 0 15 13" style="margin-right:8px"><rect width="15" height="13" rx="2" fill="#1a6fc0"/><path d="M2 4h11M2 6.500h11M4 9.500h7" stroke="#fff" stroke-dasharray="1 1"/></svg>
<svg width="18" height="16" viewBox="0 0 18 16" style="margin-right:4px"><circle cx="6" cy="4" r="3.500" fill="#b8c4d2"/><path d="M0 14c0-5 3-6 6-6s6 1 6 6z" fill="#b8c4d2"/><rect x="8" y="9" width="10" height="7" fill="#dde4ec"/></svg>
<svg width="14" height="14" viewBox="0 0 14 14" style="margin-right:7px"><path d="M4 0L0 2l1 4h2v8h8V6h2l1-4-4-2-3 2z" fill="#1a6fc0"/></svg>
<svg width="15" height="15" viewBox="0 0 15 15"><path d="M1 14l7-8c-1-3 1-6 5-5l-3 3 2 2 2-3c1 4-2 6-5 6l-6 6z" fill="#1a6fc0"/></svg></div><div class="p"></div>`);
define('gl-dialog',`:host{position:absolute;left:736px;top:190px;width:490px;height:291px;background:#f0f0f0;border:1px solid #2b8fdc;box-shadow:0 2px 12px rgba(0,0,0,.4);display:flex;flex-direction:column;font-size:12px;color:#111}
.tt{display:flex;align-items:center;height:26px;background:#fff;padding-left:3px;flex:none;justify-content:space-between;padding-right:10px}
.in{height:27px;margin:4px 8px 0 5px;border:1px solid #7f7f7f;background:#fff;text-align:center;font:bold 18.7px/25px "Liberation Serif",serif;flex:none;color:#0a0a14}
.lb{display:flex;height:31px;align-items:center;flex:none;padding:7px 0 0 5px;font-size:12px}
.cols{display:flex;gap:6px;margin-left:5px;flex:none}.col{height:159px;border:1px solid #a0a0a0;background:#f0f0f0;flex:none}
.li{height:17px;display:flex;align-items:center;padding-left:3px;margin:0 1px}.li.s{background:#c9dcea;height:16px;margin-top:1px}
.hs{display:flex;align-items:center;height:18px;margin-top:88px;border-top:1px solid #fff;justify-content:space-between;padding:0 4px}
.th{width:17px;height:15px;background:#cdcdcd;margin-left:4px;margin-right:auto}
.txt{padding:3px 0 0 3px;line-height:17px;font-size:12px;white-space:nowrap}
.bt{display:flex;justify-content:flex-end;margin-top:12px;padding-right:22px;gap:34px;flex:none}.b{width:58px;height:20px;background:#e1e1e1;border:1px solid #adadad;display:flex;align-items:center;justify-content:center}.b.d{border:2px solid #0078d7}`,
`<div class="tt"><span>钢筋输入助手-独基单元横向受力筋</span><svg width="12" height="12" viewBox="0 0 12 12"><path d="M1 1l10 10M11 1L1 11" stroke="#222"/></svg></div>
<div class="in">C14@200/C14@200</div>
<div class="lb"><span style="width:267px">1.输入格式</span><span>2.输入说明</span></div>
<div class="cols"><div class="col" style="width:252px;padding-top:1px"><div class="li">${sim('4C16 或 2C22+2C25')}</div><div class="li">${sim('C16@100')}</div><div class="li s">${sim('4C14/C16@100')}</div>
<div class="hs"><svg width="8" height="10" viewBox="0 0 8 10"><path d="M6.500 1l-4 4 4 4" fill="none" stroke="#444" stroke-width="1.500"/></svg><span class="th"></span><svg width="8" height="10" viewBox="0 0 8 10"><path d="M1.500 1l4 4-4 4" fill="none" stroke="#444" stroke-width="1.500"/></svg></div></div>
<div class="col txt" style="width:218px">${simq('当有上下部钢筋时,钢筋信息用"/"隔')}<br>${simq('开,"/"前面表示下部钢筋,"/"后面表示')}<br>${sim('上部钢筋。')}</div></div>
<div class="bt"><div class="b d">确定</div><div class="b">取消</div></div>`);
</script>
</body></html>
